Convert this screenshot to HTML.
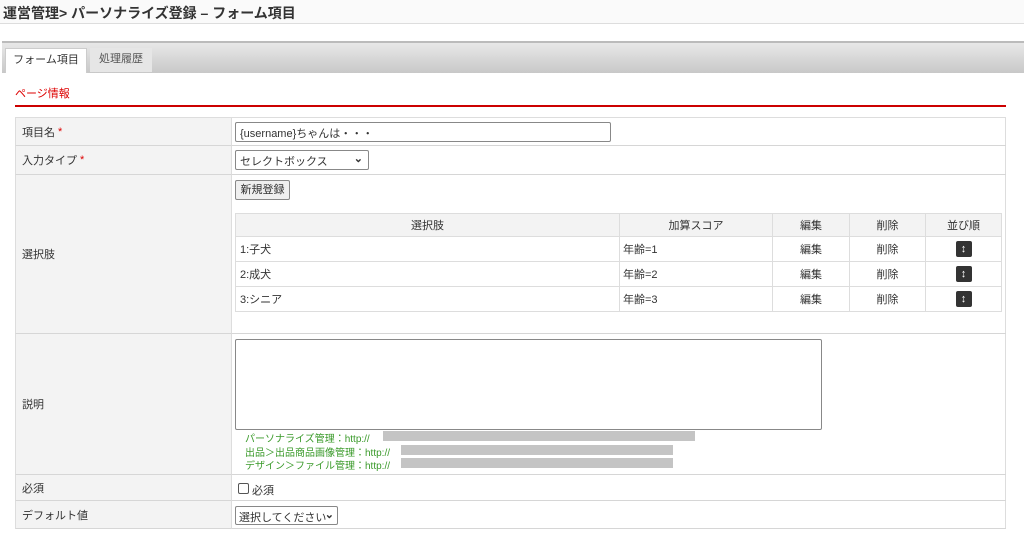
<!DOCTYPE html>
<html><head><meta charset="utf-8"><style>
*{box-sizing:border-box;margin:0;padding:0}
body{width:1024px;height:537px;background:#fff;font-family:"Liberation Sans","Noto Sans CJK JP",sans-serif;font-size:11px;color:#333;position:relative;overflow:hidden}
.a{position:absolute}
.lbl{background:#f3f3f3;border-bottom:1px solid #d6d6d6;border-left:1px solid #ddd;left:15px;width:216px;padding-left:6px;display:flex;align-items:center}
.val{left:231px;width:775px;border-bottom:1px solid #d6d6d6;border-left:1px solid #ddd}
.req{color:#d00}
.it{border-collapse:collapse;position:absolute;left:235px;top:213px;width:767px}
.it td{border:1px solid #ddd;height:25px;font-size:11px;text-align:center}
.it tr:first-child td{background:#f3f3f3;height:23px}
.ic{display:inline-block;width:16px;height:16px;background:#333;border-radius:2px;color:#fff;font-weight:bold;font-size:11px;line-height:16px}
.g{color:#3a9a2a;left:245px;font-size:10px}
.bar{background:#c4c4c4;height:10px}
</style></head><body>
<div class="a" style="left:0;top:0;width:1024px;height:24px;border-bottom:1px solid #ddd;background:#fafafa"></div>
<div class="a" style="left:3px;top:3px;font-size:14px;font-weight:bold;color:#333">運営管理&gt; パーソナライズ登録 – フォーム項目</div>
<div class="a" style="left:2px;top:41px;width:1022px;height:32px;border-top:2px solid #bbb;background:linear-gradient(#e8e8e8,#c8c8c8)"></div>
<div class="a" style="left:5px;top:48px;width:82px;height:25px;background:#fff;border:1px solid #ccc;border-bottom:none;text-align:center;line-height:22px">フォーム項目</div>
<div class="a" style="left:90px;top:48px;width:62px;height:24px;background:#e6e6e6;text-align:center;line-height:22px;color:#555">処理履歴</div>
<div class="a" style="left:15px;top:85px;color:#d00">ページ情報</div>
<div class="a" style="left:15px;top:105px;width:991px;height:2px;background:#c00"></div>
<div class="a" style="left:15px;top:117px;width:991px;height:412px;border:1px solid #ddd;border-bottom:none"></div>
<div class="a lbl" style="top:117px;height:29px;border-top:1px solid #ddd">項目名 <span class="req">&nbsp;*</span></div>
<div class="a val" style="top:117px;height:29px"></div>
<div class="a" style="left:235px;top:122px;width:376px;height:20px;border:1px solid #888;border-radius:2px;padding:2px 4px;font-size:11px">{username}ちゃんは・・・</div>
<div class="a lbl" style="top:146px;height:29px">入力タイプ <span class="req">&nbsp;*</span></div>
<div class="a val" style="top:146px;height:29px"></div>
<div class="a" style="left:235px;top:150px;width:134px;height:20px;border:1px solid #888;border-radius:2px;padding:2px 4px">セレクトボックス<span style="position:absolute;right:5px;top:1px;font-weight:bold">⌄</span></div>
<div class="a lbl" style="top:175px;height:159px">選択肢</div>
<div class="a val" style="top:175px;height:159px"></div>
<div class="a" style="left:235px;top:180px;width:55px;height:20px;border:1px solid #888;border-radius:2px;background:#efefef;text-align:center;line-height:18px">新規登録</div>
<table class="it">
<tr><td style="width:384px">選択肢</td><td style="width:153px">加算スコア</td><td style="width:77px">編集</td><td style="width:76px">削除</td><td>並び順</td></tr>
<tr><td style="text-align:left;padding-left:4px">1:子犬</td><td style="text-align:left;padding-left:3px">年齢=1</td><td>編集</td><td>削除</td><td><span class="ic">↕</span></td></tr>
<tr><td style="text-align:left;padding-left:4px">2:成犬</td><td style="text-align:left;padding-left:3px">年齢=2</td><td>編集</td><td>削除</td><td><span class="ic">↕</span></td></tr>
<tr><td style="text-align:left;padding-left:4px">3:シニア</td><td style="text-align:left;padding-left:3px">年齢=3</td><td>編集</td><td>削除</td><td><span class="ic">↕</span></td></tr>
</table>
<div class="a lbl" style="top:334px;height:141px">説明</div>
<div class="a val" style="top:334px;height:141px"></div>
<div class="a" style="left:235px;top:339px;width:587px;height:91px;border:1px solid #888;border-radius:2px"></div>
<div class="a g" style="top:430px">パーソナライズ管理：http://</div>
<div class="a bar" style="left:383px;top:431px;width:312px"></div>
<div class="a g" style="top:444px">出品＞出品商品画像管理：http://</div>
<div class="a bar" style="left:401px;top:445px;width:272px"></div>
<div class="a g" style="top:457px">デザイン＞ファイル管理：http://</div>
<div class="a bar" style="left:401px;top:458px;width:272px"></div>
<div class="a lbl" style="top:475px;height:26px">必須</div>
<div class="a val" style="top:475px;height:26px"></div>
<div class="a" style="left:238px;top:483px;width:11px;height:11px;border:1px solid #555;border-radius:2px"></div>
<div class="a" style="left:252px;top:482px">必須</div>
<div class="a lbl" style="top:501px;height:28px">デフォルト値</div>
<div class="a val" style="top:501px;height:28px"></div>
<div class="a" style="left:235px;top:506px;width:103px;height:19px;border:1px solid #888;border-radius:2px;padding:2px 3px">選択してください<span style="position:absolute;right:3px;top:1px;font-weight:bold">⌄</span></div>
</body></html>
